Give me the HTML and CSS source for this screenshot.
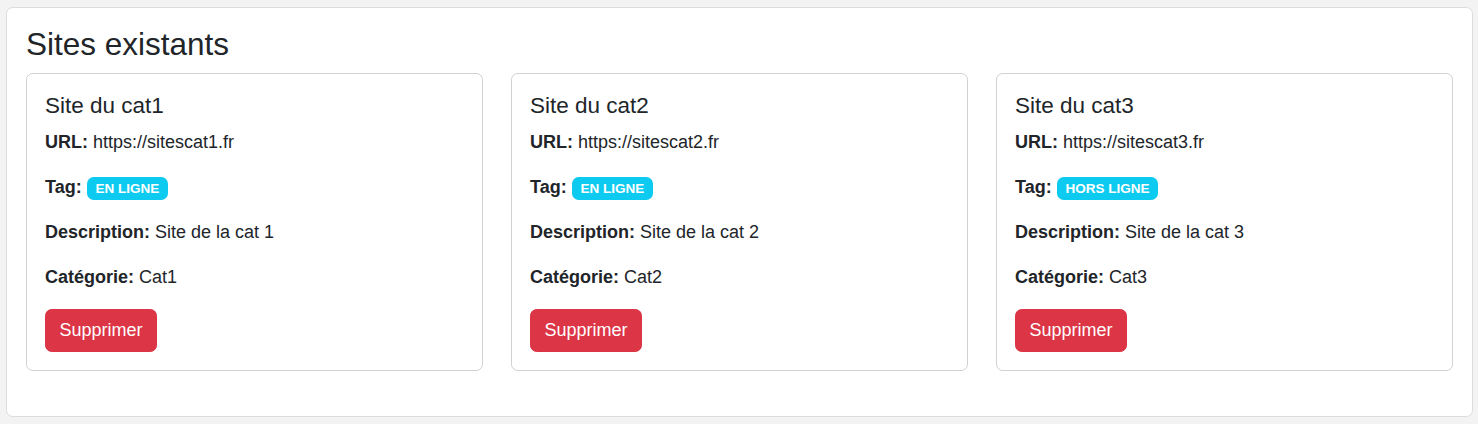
FILE: index.html
```html
<!DOCTYPE html>
<html lang="fr">
<head>
<meta charset="utf-8">
<title>Sites existants</title>
<link rel="stylesheet" href="styles.css">
</head>
<body>
<div class="panel">
  <h3 class="panel-title">Sites existants</h3>
  <div class="grid">
    <div class="card">
      <h5 class="card-title">Site du cat1</h5>
      <p><strong>URL:</strong> https://sitescat1.fr</p>
      <p><strong>Tag:</strong> <span class="badge">EN LIGNE</span></p>
      <p><strong>Description:</strong> Site de la cat 1</p>
      <p><strong>Catégorie:</strong> Cat1</p>
      <button class="btn-danger">Supprimer</button>
    </div>
    <div class="card">
      <h5 class="card-title">Site du cat2</h5>
      <p><strong>URL:</strong> https://sitescat2.fr</p>
      <p><strong>Tag:</strong> <span class="badge">EN LIGNE</span></p>
      <p><strong>Description:</strong> Site de la cat 2</p>
      <p><strong>Catégorie:</strong> Cat2</p>
      <button class="btn-danger">Supprimer</button>
    </div>
    <div class="card">
      <h5 class="card-title">Site du cat3</h5>
      <p><strong>URL:</strong> https://sitescat3.fr</p>
      <p><strong>Tag:</strong> <span class="badge">HORS LIGNE</span></p>
      <p><strong>Description:</strong> Site de la cat 3</p>
      <p><strong>Catégorie:</strong> Cat3</p>
      <button class="btn-danger">Supprimer</button>
    </div>
  </div>
</div>
</body>
</html>
```

FILE: styles.css
```css
html {
  font-size: 18px;
}
body {
  margin: 0;
  padding: 7px 5px 8px 6px;
  background: #f3f3f3;
  font-family: "Liberation Sans", Arial, sans-serif;
  font-size: 18px;
  line-height: 1.5;
  color: #212529;
}
.panel {
  background: #fff;
  border: 1px solid #dcdcdc;
  border-radius: 6.75px;
  padding: 18px 19px;
}
.panel-title {
  margin: 0 0 9px 0;
  font-size: 31.5px;
  font-weight: 500;
  line-height: 1.2;
}
.grid {
  display: grid;
  grid-template-columns: repeat(3, 1fr);
  column-gap: 28px;
}
.card {
  border: 1px solid rgba(0, 0, 0, 0.175);
  border-radius: 6.75px;
  padding: 18px;
  margin-bottom: 27px;
}
.card-title {
  margin: 0 0 10px 0;
  font-size: 22.5px;
  font-weight: 500;
  line-height: 1.2;
}
.card p {
  margin: 0 0 18px 0;
}
.card strong {
  font-weight: 700;
}
.badge {
  display: inline-block;
  padding: 0.35em 0.65em;
  font-size: 0.75em;
  font-weight: 700;
  line-height: 1;
  color: #fff;
  background: #0dcaf0;
  border-radius: 6.75px;
  vertical-align: baseline;
  white-space: nowrap;
}
.btn-danger {
  display: inline-block;
  font-family: inherit;
  font-size: 18px;
  line-height: 1.5;
  padding: 7.25px 13.5px 7.25px 13.5px;
  color: #fff;
  background: #dc3545;
  border: 1px solid #dc3545;
  border-radius: 6.75px;
  cursor: pointer;
}
```
